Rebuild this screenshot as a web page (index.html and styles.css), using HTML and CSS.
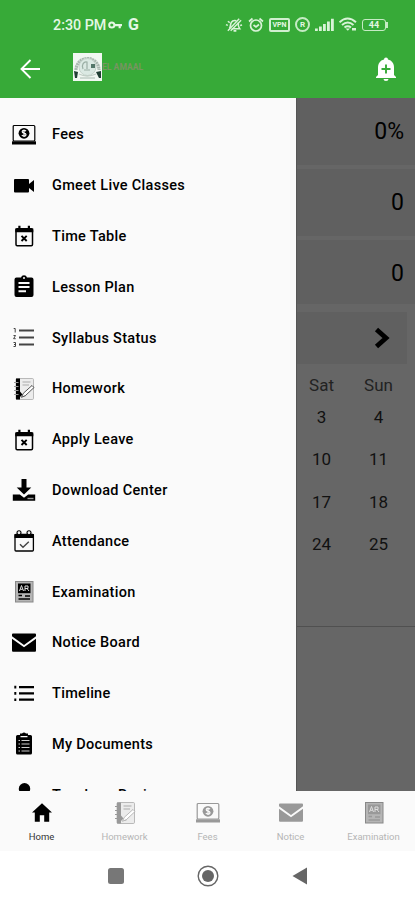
FILE: index.html
```html
<!DOCTYPE html>
<html lang="en">
<head>
    <meta charset="UTF-8">
    <meta name="viewport" content="width=device-width, initial-scale=1.0">
    <title>Student Menu</title>
    <link rel="stylesheet" href="styles.css">
</head>
<body>
    <!-- Shared icons -->
    <svg class="icon-set" xmlns="http://www.w3.org/2000/svg">
        <symbol id="fees" viewBox="0 0 24 24">
            <rect x="1.2" y="2.5" width="21.6" height="15.5" rx="1" fill="none" stroke="currentColor" stroke-width="1.2"/>
            <path d="M0 18.3h24v3.2H0z"/>
            <circle cx="12" cy="10.3" r="5.4"/>
            <path d="M14 8.2c-1-1.2-3.8-1-3.8.6 0 1.8 3.8 1 3.8 2.9 0 1.7-3 1.9-4.2.5M12 6.5v7.6" fill="none" stroke="#fafafa" stroke-width="1.2"/>
        </symbol>
        <symbol id="video" viewBox="0 0 24 24">
            <path d="M2 6Q2 5 3 5h13q1 0 1 1v4l5-4v12l-5-4v3.5q0 1-1 1H3q-1 0-1-1z"/>
        </symbol>
        <symbol id="calendar-x" viewBox="0 0 24 24">
            <rect x="4" y="4.8" width="16.5" height="17" rx="1.2" fill="none" stroke="currentColor" stroke-width="1.5"/>
            <path d="M3.3 4.5h18v3.7h-18zM6.3 1.8h2.2v4H6.3zM15.8 1.8H18v4h-2.2z"/>
            <path d="M9.5 11.8l5.2 5.2M14.7 11.8l-5.2 5.2" stroke="currentColor" stroke-width="1.9"/>
        </symbol>
        <symbol id="clipboard" viewBox="0 0 24 24">
            <path fill-rule="evenodd" d="M4.5 2.5H9a3.1 3.1 0 0 1 6 0h4.5Q21.5 2.5 21.5 4.5v15.5q0 2-2 2h-15q-2 0-2-2V4.5q0-2 2-2zM12 1.9a1 1 0 1 0 0 2 1 1 0 0 0 0-2zM6.5 7v2h11V7zM6.5 11v2h11v-2zM6.5 15.3v2h7.5v-2z"/>
        </symbol>
        <symbol id="numbers" viewBox="0 0 24 24">
            <path d="M7 3.5h15v1.9H7zM7 10.500h15v1.9H7zM7 17.5h15v1.9H7z" fill="#444"/>
            <path d="M1.7 2.5h1.5v4M1.5 9.5h2l-1.9 3.2h2.1M1.5 16.5h2v4h-2M2 18.5h1.5" fill="none" stroke="#444" stroke-width="1"/>
        </symbol>
        <symbol id="notebook" viewBox="0 0 24 24">
            <rect x="4" y="1.5" width="17.5" height="21" rx="1.2" fill="#ececec" stroke="#aaa" stroke-width=".8"/>
            <path d="M4 1.5h4v21H4z"/>
            <path d="M2 5.5h4.5M2 9.5h4.5M2 13.5h4.5M2 17.5h4.5" stroke="#999" stroke-width="1.1"/>
            <path d="M10.5 5h8M10.5 8h6.5M10.5 19h3" stroke="#aaa" stroke-width="1"/>
            <path d="M20 8.5l2 2-8.5 8-4 1.8 1.8-4z" fill="#fff" stroke="currentColor" stroke-opacity=".65"/>
            <path d="M8 14.5l2.5 3L8 20z"/>
        </symbol>
        <symbol id="download" viewBox="0 0 24 24">
            <path d="M9.5 1h5v8.5h4.8L12 16.5 4.7 9.5h4.8z"/>
            <path d="M.8 16.5h7L12 19.8l4.2-3.3h7v6.3H.8z"/>
            <path d="M15.5 20.5h6" stroke="#999" stroke-width="1.4"/>
        </symbol>
        <symbol id="calendar-check" viewBox="0 0 24 24">
            <rect x="3" y="5.5" width="18.4" height="16.5" rx="1" fill="none" stroke="currentColor" stroke-width="1.3"/>
            <path d="M2.5 5h19.4v4H2.5z"/>
            <circle cx="7" cy="3.8" r="2" fill="#eee" stroke="currentColor" stroke-width="1.1"/>
            <circle cx="17" cy="3.8" r="2" fill="#eee" stroke="currentColor" stroke-width="1.1"/>
            <path d="M8 15.2l3 3 5.8-5.5" fill="none" stroke="#444" stroke-width="1.4"/>
        </symbol>
        <symbol id="exam" viewBox="0 0 24 24">
            <rect x="3.5" y="1.5" width="17.5" height="20.5" fill="#b5b5b5" stroke="#888" stroke-width="1"/>
            <path d="M6 3.5h12.5v9.7H6z"/>
            <path d="M7.5 11l2-5.5 2 5.5M8.3 9.3h2.4M13 11V6h3v2.5h-3M15 8.5l2 2.5" fill="none" stroke="#ddd" stroke-width="1"/>
            <path d="M6.5 15.5h3.5M6.5 19h11.5M13 16h5" stroke="currentColor" stroke-width="1.7"/>
        </symbol>
        <symbol id="mail" viewBox="0 0 24 24">
            <path d="M1 2.5h22q1 0 1 1v1.8l-12 8.6L0 5.3V3.5q0-1 1-1zM0 7.7l12 8.5 12-8.5v11.8q0 1.3-1 1.3H1q-1 0-1-1.3z"/>
        </symbol>
        <symbol id="list" viewBox="0 0 24 24">
            <path d="M7 4h15v2.2H7zM7 10.3h15v2.2H7zM7 16.6h15v2.2H7zM2.3 3.8h2v2.6h-2zM2.3 10.1h2v2.6h-2zM2.3 16.4h2V19h-2z"/>
        </symbol>
        <symbol id="documents" viewBox="0 0 24 24">
            <path fill-rule="evenodd" d="M5.5 3H8V1.5h2Q12-.5 14 1.5h2V3h2.5Q20 3 20 4.5V21q0 1.5-1.5 1.5h-13Q4 22.5 4 21V4.5Q4 3 5.5 3zM8.500 4v1.2h7V4z"/>
            <path d="M6.5 8.5h1.5M9.5 8.5h8M6.5 12h1.5M9.5 12h8M6.5 15.5h1.5M9.5 15.5h8M6.5 19h1.5M9.5 19h8" stroke="#ccc" stroke-width="1.2"/>
        </symbol>
        <symbol id="person" viewBox="0 0 24 24">
            <circle cx="12.5" cy="5.7" r="5.7"/>
            <path d="M2 23q0-9 10.500-9T23 23z"/>
        </symbol>
        <symbol id="home" viewBox="0 0 24 24">
            <path d="M12 2.3L22 11.5h-2.8v9.200h-5v-6.5H9.8v6.5h-5v-9.200H2z"/>
        </symbol>
    </svg>

    <header>
        <div class="statusbar">
            <div class="status-left">
                <span class="time">2:30 PM</span>
                <svg class="key" width="14" height="8" viewBox="0 0 14 8">
                    <circle cx="3.8" cy="4" r="2.6" fill="none" stroke="#e4f7e4" stroke-width="2"/>
                    <path d="M6 3h8v2.2h-1.2V7.3h-2.2V5.2H6z" fill="#e4f7e4"/>
                </svg>
                <b class="google">G</b>
            </div>
            <div class="status-right">
                <svg width="18" height="16" viewBox="0 0 19 16">
                    <path d="M4.5 11.5c1.2-1 1-2 1.5-4.5C6.7 4 9 2.5 12 3.5M14 5.5c-.3 3 0 4.5 1.5 6.5H7M9 14.2h3" fill="none" stroke="#d9f3d8" stroke-width="1.7"/>
                    <path d="M3 14L15 1.5M6 14L17 3M1 7.5l2 1M3 4l2 1.5M16 8.5l2-.5" stroke="#d9f3d8" stroke-width="1.5"/>
                </svg>
                <svg width="16" height="16" viewBox="0 0 16 16">
                    <circle cx="8" cy="8.5" r="5.5" fill="none" stroke="#d9f3d8" stroke-width="1.7"/>
                    <path d="M1 4.5L4.5 1.5M11.5 1.5L15 4.5M5.5 8L8 10l3-2.5" fill="none" stroke="#d9f3d8" stroke-width="1.7"/>
                </svg>
                <span class="vpn">VPN</span>
                <span class="registered">R</span>
                <svg width="19" height="14" viewBox="0 0 19 14">
                    <path d="M0 10.5h2.8V13H0zM4 8.5h2.8V13H4zM8 6h2.8v7H8zM12 3.5h2.8V13H12zM16 .8h2.8V13H16z" fill="#d9f3d8"/>
                </svg>
                <svg width="18" height="15" viewBox="0 0 18 15">
                    <path d="M.5 5.3q8-7.5 16.5 0M3 8q5.8-5 11.5 0M5.5 10.5q3.2-2.5 6.5 0" fill="none" stroke="#d9f3d8" stroke-width="2"/>
                    <path d="M6.5 11.5h4.5l-2.2 2.3zM13 11h4v2.5h-4z" fill="#d9f3d8"/>
                </svg>
                <div class="battery">
                    <span>44</span>
                </div>
            </div>
        </div>
        <div class="toolbar">
            <svg class="back" width="22" height="22" viewBox="0 0 22 22">
                <path d="M21 11H2.5M11.5 2L2.5 11l9 9" fill="none" stroke="#fff" stroke-width="1.9"/>
            </svg>
            <svg class="logo" width="29" height="28" viewBox="0 0 29 28">
                <path d="M0 0h29v28H0z" fill="#f1f7f2"/>
                <path d="M3 17a11.5 11.5 0 1 1 23 0" fill="none" stroke="#a9b8b0" stroke-width="3.2" stroke-dasharray="2 .5"/>
                <circle cx="14.5" cy="14" r="8.5" fill="#dbe9e3" stroke="#c5d3cb"/>
                <path d="M10 16c-2-4 1-8 4-7v7M11 17h6" fill="none" stroke="#9aaea4" stroke-width="1.2"/>
                <path d="M18 11h4v4h-4z" fill="#54776a"/>
                <path d="M1 18l4 1-1 6H2zM28 18l-5 1 3 6h2z" fill="#223f35"/>
                <path d="M6 21q8 4 17 0M7 25h15" fill="none" stroke="#c0cec6" stroke-width="1.3"/>
            </svg>
            <span class="school">EL AMAAL</span>
            <svg class="bell" width="22" height="24" viewBox="0 0 22 24">
                <path d="M9 2.5a2 2 0 0 1 4 0c4 1 6 4 6 8V18l2 2v1H1v-1l2-2v-7.5c0-4 2-7 6-8zM8.5 22h5a2.5 2 0 0 1-5 0z" fill="#fff"/>
                <path d="M11 7.5v9M6.5 12h9" stroke="#37aa38" stroke-width="1.9"/>
            </svg>
        </div>
    </header>

    <main>
        <nav class="drawer">
            <a><svg><use href="#fees"/></svg>Fees</a>
            <a><svg><use href="#video"/></svg>Gmeet Live Classes</a>
            <a><svg><use href="#calendar-x"/></svg>Time Table</a>
            <a><svg><use href="#clipboard"/></svg>Lesson Plan</a>
            <a><svg><use href="#numbers"/></svg>Syllabus Status</a>
            <a><svg><use href="#notebook"/></svg>Homework</a>
            <a><svg><use href="#calendar-x"/></svg>Apply Leave</a>
            <a><svg><use href="#download"/></svg>Download Center</a>
            <a><svg><use href="#calendar-check"/></svg>Attendance</a>
            <a><svg><use href="#exam"/></svg>Examination</a>
            <a><svg><use href="#mail"/></svg>Notice Board</a>
            <a><svg><use href="#list"/></svg>Timeline</a>
            <a><svg><use href="#documents"/></svg>My Documents</a>
            <a><svg><use href="#person"/></svg>Teachers Review</a>
        </nav>
        <section class="dashboard">
            <div class="card">0%</div>
            <div class="card">0</div>
            <div class="card">0</div>
            <div class="month">
                <svg width="17" height="22" viewBox="0 0 17 22">
                    <path d="M2.5 2.5L12 11l-9.5 8.5" fill="none" stroke="#000" stroke-width="4.8"/>
                </svg>
            </div>
            <div class="calendar">
                <table>
                    <thead>
                        <tr><th>Sat</th><th>Sun</th></tr>
                    </thead>
                    <tbody>
                        <tr><td>3</td><td>4</td></tr>
                        <tr><td>10</td><td>11</td></tr>
                        <tr><td>17</td><td>18</td></tr>
                        <tr><td>24</td><td>25</td></tr>
                    </tbody>
                </table>
            </div>
        </section>
    </main>

    <footer class="tabs">
        <a class="active"><svg><use href="#home"/></svg>Home</a>
        <a><svg><use href="#notebook"/></svg>Homework</a>
        <a><svg><use href="#fees"/></svg>Fees</a>
        <a><svg><use href="#mail"/></svg>Notice</a>
        <a><svg><use href="#exam"/></svg>Examination</a>
    </footer>

    <div class="system-nav">
        <svg width="16" height="16" viewBox="0 0 16 16"><rect width="16" height="16" rx="2.5" fill="#777"/></svg>
        <svg width="22" height="22" viewBox="0 0 22 22">
            <circle cx="11" cy="11" r="9.8" fill="none" stroke="#666" stroke-width="1.4"/>
            <circle cx="11" cy="11" r="6" fill="#666"/>
        </svg>
        <svg width="16" height="18" viewBox="0 0 16 18"><path d="M15 .5v17L.5 9z" fill="#666"/></svg>
    </div>
</body>
</html>
```
FILE: styles.css
```css
* {
    box-sizing: border-box;
}
body {
    margin: 0;
    font-family: Roboto, sans-serif;
    background-color: #ffffff;
    display: flex;
    flex-direction: column;
    height: 100vh;
    overflow: hidden;
}
svg {
    display: block;
    flex-shrink: 0;
}
.icon-set {
    display: none;
}
header {
    height: 98px;
    background-color: #37aa38;
    flex-shrink: 0;
}
.statusbar {
    height: 49px;
    display: flex;
    justify-content: space-between;
    align-items: center;
    padding: 0 27px 0 53px;
    color: #e4f7e4;
}
.status-left, .status-right {
    display: flex;
    align-items: center;
}
.time {
    font-size: 14.3px;
    font-weight: 500;
    width: 55px;
    white-space: nowrap;
}
.google {
    font-size: 16px;
    margin-left: 6px;
}
.status-right {
    gap: 5px;
}
.vpn {
    width: 21px;
    height: 14px;
    border: 2px solid #d0efcf;
    border-radius: 2px;
    font-size: 7px;
    font-weight: bold;
    line-height: 10px;
    text-align: center;
}
.registered {
    width: 15px;
    height: 15px;
    border: 2px solid #c5ebc4;
    border-radius: 50%;
    font-size: 8px;
    font-weight: bold;
    line-height: 11px;
    text-align: center;
}
.battery {
    display: flex;
    align-items: center;
}
.battery span {
    width: 24px;
    height: 12px;
    border: 1.5px solid #c5ebc4;
    border-radius: 3px;
    font-size: 9px;
    font-weight: bold;
    line-height: 10px;
    text-align: center;
}
.battery::after {
    content: "";
    width: 2px;
    height: 6px;
    background-color: #c5ebc4;
}
.toolbar {
    height: 40px;
    display: flex;
    align-items: center;
    padding: 0 18px 0 19px;
}
.logo {
    margin: -5px 0 0 32px;
}
.school {
    color: #769561;
    font-size: 8.6px;
    font-weight: bold;
    margin: -5px auto 0 0;
}
main {
    display: flex;
    height: 693px;
    flex-shrink: 0;
}
.drawer {
    width: 296px;
    padding-top: 11px;
    background-color: #fafafa;
    overflow: hidden;
    flex-shrink: 0;
}
.drawer a {
    display: flex;
    align-items: center;
    height: 50.8px;
    padding: 1px 0 0 12px;
    color: #000000;
    font-size: 14.5px;
    font-weight: 500;
    letter-spacing: 0.3px;
}
.drawer svg {
    width: 24px;
    height: 24px;
    margin-right: 16px;
    fill: currentColor;
}
.dashboard {
    flex: 1;
    background-color: #666666;
    border-left: 1px solid #555555;
    overflow: hidden;
}
.card {
    height: 67px;
    margin-bottom: 4px;
    padding-right: 11px;
    background-color: #606060;
    font-size: 23px;
    line-height: 67px;
    text-align: right;
}
.card:nth-child(3) {
    height: 64px;
}
.month {
    height: 52px;
    margin: 8px 8px 0 0;
    padding-right: 16px;
    background-color: #606060;
    display: flex;
    justify-content: flex-end;
    align-items: center;
}
.calendar {
    height: 263px;
    padding-top: 10px;
    border-bottom: 1px solid #505050;
}
.calendar table {
    width: 114px;
    margin-left: -4px;
    border-collapse: collapse;
    table-layout: fixed;
}
.calendar th, .calendar td {
    height: 42.3px;
    padding: 0;
    font-size: 17px;
    text-align: center;
    color: #111111;
}
.calendar th {
    height: 22px;
    font-weight: normal;
    color: #222222;
}
.tabs {
    height: 60px;
    display: flex;
    background-color: #fafafa;
    flex-shrink: 0;
}
.tabs a {
    flex: 1;
    display: flex;
    flex-direction: column;
    align-items: center;
    padding-top: 10px;
    color: #b5b5b5;
    font-size: 9.5px;
}
.tabs svg {
    width: 24px;
    height: 24px;
    margin-bottom: 6px;
    color: #999999;
    fill: currentColor;
}
.tabs .active {
    color: #333333;
}
.tabs .active svg {
    color: #000000;
}
.system-nav {
    height: 49px;
    display: flex;
    justify-content: center;
    align-items: center;
    gap: 73px;
}
```
